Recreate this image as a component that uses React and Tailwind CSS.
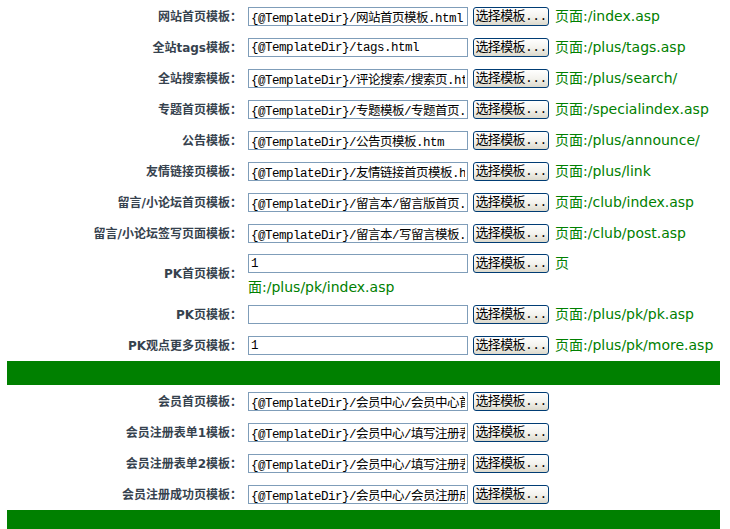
import React from 'react';

const groups = [
  [
    { label: '网站首页模板：', value: '{@TemplateDir}/网站首页模板.html', page: '页面:/index.asp' },
    { label: '全站tags模板：', value: '{@TemplateDir}/tags.html', page: '页面:/plus/tags.asp' },
    { label: '全站搜索模板：', value: '{@TemplateDir}/评论搜索/搜索页.html', page: '页面:/plus/search/' },
    { label: '专题首页模板：', value: '{@TemplateDir}/专题模板/专题首页.html', page: '页面:/specialindex.asp' },
    { label: '公告模板：', value: '{@TemplateDir}/公告页模板.htm', page: '页面:/plus/announce/' },
    { label: '友情链接页模板：', value: '{@TemplateDir}/友情链接首页模板.html', page: '页面:/plus/link' },
    { label: '留言/小论坛首页模板：', value: '{@TemplateDir}/留言本/留言版首页.html', page: '页面:/club/index.asp' },
    { label: '留言/小论坛签写页面模板：', value: '{@TemplateDir}/留言本/写留言模板.html', page: '页面:/club/post.asp' },
    { label: 'PK首页模板：', value: '1', page: '页面:/plus/pk/index.asp', wrap: true },
    { label: 'PK页模板：', value: '', page: '页面:/plus/pk/pk.asp' },
    { label: 'PK观点更多页模板：', value: '1', page: '页面:/plus/pk/more.asp' },
  ],
  [
    { label: '会员首页模板：', value: '{@TemplateDir}/会员中心/会员中心首页.html' },
    { label: '会员注册表单1模板：', value: '{@TemplateDir}/会员中心/填写注册表单1.html' },
    { label: '会员注册表单2模板：', value: '{@TemplateDir}/会员中心/填写注册表单2.html' },
    { label: '会员注册成功页模板：', value: '{@TemplateDir}/会员中心/会员注册成功.html' },
  ],
];

const TemplateInput = ({ value }) => (
  <input
    type="text"
    defaultValue={value}
    className="w-[220px] h-[19px] shrink-0 border border-[#7f9db9] bg-white px-[2px] text-[12.5px] tracking-[-0.5px] text-black outline-none [font-family:'Liberation_Mono','Noto_Sans_CJK_SC',monospace]"
  />
);

const PickButton = () => (
  <button
    type="button"
    className="ml-[5px] w-[76px] h-[19px] shrink-0 rounded-[3px] border border-[#003c74] bg-gradient-to-b from-white via-[#f4f3ee] to-[#dcd9cc] text-[13px] tracking-[-0.6px] leading-none text-black [font-family:'Liberation_Mono','Noto_Sans_CJK_SC',monospace]"
  >
    选择模板...
  </button>
);

const Row = ({ label, value, page, wrap }) => (
  <div className={`flex items-center ${wrap ? 'h-[50px]' : 'h-[31px]'}`}>
    <div className="w-[238px] shrink-0 pr-[3px] text-right text-[12px] font-bold text-[#36424e] [font-family:'DejaVu_Sans','Noto_Sans_CJK_SC',sans-serif]">
      {label}
    </div>
    <div className="flex-1 pl-[3px] text-[14px] text-[#008000] [font-family:'DejaVu_Sans','Noto_Sans_CJK_SC',sans-serif]">
      {wrap ? (
        <>
          <div className="flex items-center mt-[1px]">
            <TemplateInput value={value} />
            <PickButton />
            <span className="ml-[6px]">{page.slice(0, 1)}</span>
          </div>
          <div className="mt-[4px] leading-[18px]">{page.slice(1)}</div>
        </>
      ) : (
        <div className="flex items-center">
          <TemplateInput value={value} />
          <PickButton />
          {page && <span className="ml-[6px] whitespace-nowrap">{page}</span>}
        </div>
      )}
    </div>
  </div>
);

export default function App() {
  return (
    <div className="w-[730px] h-[529px] overflow-hidden bg-white">
      <div className="ml-[7px] w-[713px] pt-[1px]">
        {groups.map((rows, i) => (
          <div key={i}>
            {rows.map((r) => (
              <Row key={r.label} {...r} />
            ))}
            <div className={`h-[24px] bg-[#008000] ${i === 0 ? 'mb-[1px]' : ''}`} />
          </div>
        ))}
      </div>
    </div>
  );
}
